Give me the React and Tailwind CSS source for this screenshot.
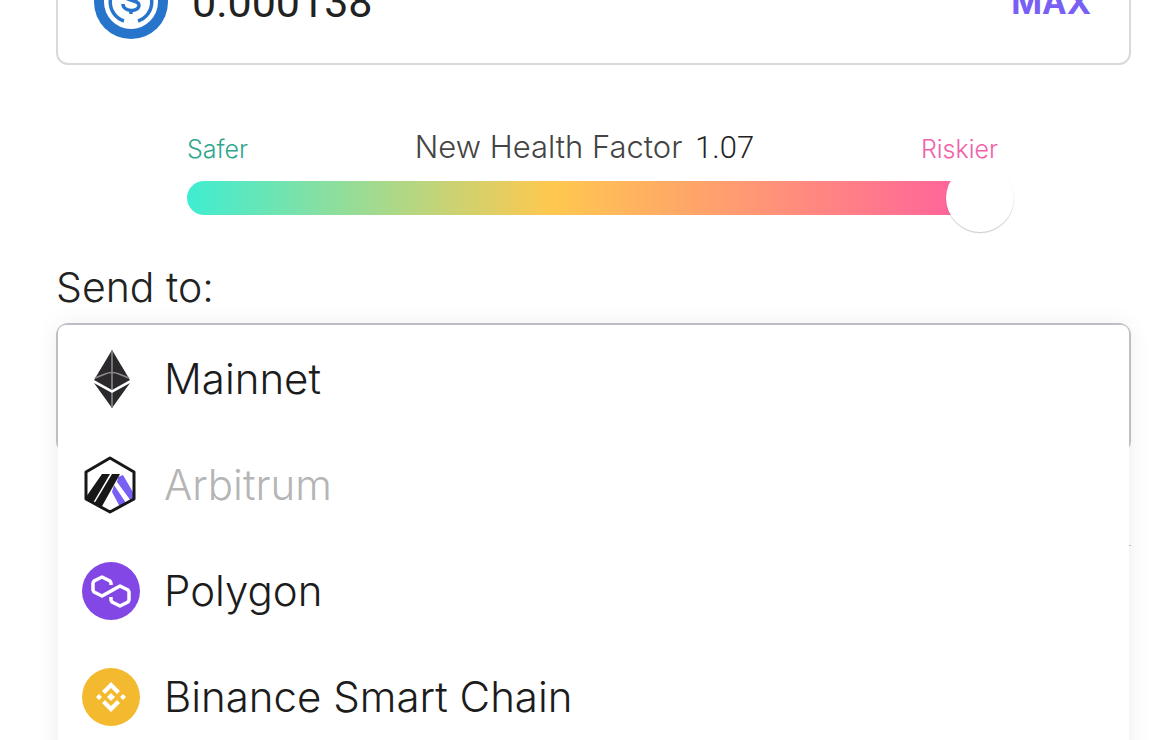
import React, { useState } from "react";

const UsdcIcon = () => (
  <svg viewBox="0 0 74 74" className="h-[74px] w-[74px] shrink-0" aria-hidden="true">
    <circle cx="37" cy="36" r="37" fill="#2775ca" />
    <circle cx="37" cy="36" r="27" fill="#fff" />
    <g fill="none" stroke="#2775ca" strokeWidth="3.5">
      <path d="M30 17a20 20 0 0 0 0 38" />
      <path d="M44 17a20 20 0 0 1 0 38" />
      <path d="M44 29c0-8-14-8-14-1 0 8 15 5 15 11 0 8-16 7-16-1M37 20v4M37 44v4" />
    </g>
  </svg>
);

const EthereumIcon = () => (
  <svg viewBox="0 0 58 58" className="h-[58px] w-[58px]" aria-hidden="true">
    <path fill="#2b292c" d="M30 0 12 30l18 10 18-10z" />
    <path fill="#2b292c" d="m12 33 18 25 18-25-18 10z" />
    <path fill="none" stroke="#8d8b8e" strokeWidth="1.5" d="m13 28 10-4q7-3 14 0l10 4" />
    <path stroke="#8d8b8e" strokeWidth="1.5" d="M30 0v40M30 43v15" />
  </svg>
);

const ArbitrumIcon = () => (
  <svg viewBox="0 0 58 58" className="h-[58px] w-[58px]" aria-hidden="true">
    <path fill="#fff" d="M28 2 52 16v27L28 56 4 43V16z" />
    <path fill="#7860f5" d="m36 21 5-2 11 19v5l-3 2-14-19zM32 29l12 18-6 4-8-15z" />
    <path fill="#171717" d="M20 18h8L11 47l-7-4v-2zM30 18h8L19 52l-7-4z" />
    <path fill="none" stroke="#171717" strokeWidth="3" strokeLinejoin="round" d="M28 2 52 16v27L28 56 4 43V16z" />
  </svg>
);

const PolygonIcon = () => (
  <svg viewBox="0 0 58 58" className="h-[58px] w-[58px]" aria-hidden="true">
    <circle cx="29" cy="29" r="29" fill="#8247e5" />
    <path
      fill="none"
      stroke="#fff"
      strokeWidth="3.5"
      strokeLinejoin="round"
      d="M29 23v-2l-1-2-8-4-8 4-1 2v7l1 2 8 4 9-5 9-5 8 4 1 2v8l-1 2-8 4-8-4-1-2v-3"
    />
  </svg>
);

const BinanceIcon = () => (
  <svg viewBox="0 0 58 58" className="h-[58px] w-[58px]" aria-hidden="true">
    <circle cx="29" cy="29" r="29" fill="#f3ba2f" />
    <g fill="#fff">
      <path d="m29 14 9 9-3 3-6-6-6 6-3-3zM29 44l-9-9 3-3 6 6 6-6 3 3z" />
      <path d="m29 25 4 4-4 4-4-4zM17 26l3 3-3 3-3-3zM41 26l3 3-3 3-3-3z" />
    </g>
  </svg>
);

const networks = [
  { id: "mainnet", name: "Mainnet", Icon: EthereumIcon },
  { id: "arbitrum", name: "Arbitrum", Icon: ArbitrumIcon, disabled: true },
  { id: "polygon", name: "Polygon", Icon: PolygonIcon },
  { id: "bsc", name: "Binance Smart Chain", Icon: BinanceIcon },
];

const AmountField = () => {
  const [amount, setAmount] = useState("0.000138");

  return (
    <div className="-mt-15 flex h-[125px] items-center gap-6 rounded-xl border-2 border-[#d9d9dd] pr-[38px] pl-9">
      <UsdcIcon />
      <input
        aria-label="Amount"
        value={amount}
        onChange={(e) => setAmount(e.target.value)}
        className="min-w-0 flex-1 bg-transparent font-['Roboto',sans-serif] text-[43px] text-[#222] outline-none"
      />
      <button className="text-[33px] font-bold text-[#7860f5]">MAX</button>
    </div>
  );
};

const HealthFactor = () => {
  const [risk, setRisk] = useState(100);

  return (
    <div className="mt-16 mr-[133px] ml-[131px]">
      <div className="flex items-baseline justify-between">
        <span className="text-[25px] leading-9 font-light text-[#2fa58c]">Safer</span>
        <label htmlFor="risk" className="text-[31px] leading-9 font-light text-[#444]">
          New Health Factor{" "}
          <span className="ml-1 font-['Roboto',sans-serif] text-[#222]">1.07</span>
        </label>
        <span className="text-[25px] leading-9 font-light text-[#f062a8]">Riskier</span>
      </div>
      <div className="mt-3.5 flex h-[34px] items-center rounded-full bg-[linear-gradient(90deg,#3fedd2_0%,#ffc84f_45%,#ff6699_94%)]">
        <input
          id="risk"
          type="range"
          value={risk}
          onChange={(e) => setRisk(e.target.value)}
          className="-mr-4 h-17 flex-1 cursor-pointer appearance-none bg-transparent outline-none [&::-webkit-slider-thumb]:h-17 [&::-webkit-slider-thumb]:w-17 [&::-webkit-slider-thumb]:appearance-none [&::-webkit-slider-thumb]:rounded-full [&::-webkit-slider-thumb]:bg-white [&::-webkit-slider-thumb]:shadow-[0_1px_1px_rgba(0,0,0,0.22)]"
        />
      </div>
    </div>
  );
};

const NetworkSelect = () => {
  const [selected, setSelected] = useState("mainnet");

  return (
    <div className="relative h-[130px] rounded-xl border-2 border-[#c4c4cc]">
      {/* Open menu covers the closed field and whatever follows it */}
      <ul
        role="listbox"
        aria-labelledby="send-to"
        className="absolute inset-x-0 top-0 z-10 rounded-lg bg-white pb-6 shadow-[0_0_24px_rgba(0,0,0,0.08)]"
      >
        {networks.map(({ id, name, Icon, disabled }) => (
          <li key={id} role="option" aria-selected={selected === id}>
            <button
              disabled={disabled}
              onClick={() => setSelected(id)}
              className="flex h-[106px] w-full items-center gap-6 px-6 pt-px text-left text-[42px] font-light text-[#1c1c1c] disabled:text-[#b5b5b5]"
            >
              <Icon />
              {name}
            </button>
          </li>
        ))}
      </ul>
    </div>
  );
};

export default function App() {
  return (
    <main className="h-screen overflow-hidden bg-white pr-[29px] pl-14 font-['Inter',sans-serif]">
      <AmountField />
      <HealthFactor />
      <h2 id="send-to" className="mt-12 mb-3 text-[41px] leading-12 font-light text-[#222]">
        Send to:
      </h2>
      <NetworkSelect />
      <hr className="mt-23 ml-1 border-[#c4c4cc]" />
    </main>
  );
}
